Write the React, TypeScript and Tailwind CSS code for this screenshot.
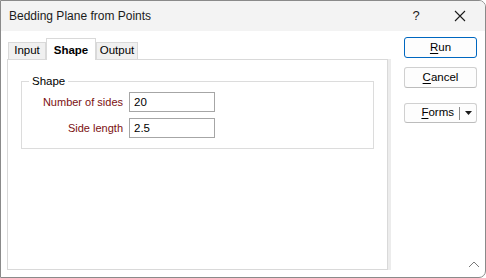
import React from "react";

const font = { fontFamily: '"Liberation Sans", Arial, sans-serif' };

const Mnemonic = ({ first, rest }: { first: string; rest: string }) => (
  <span>
    <span className="underline underline-offset-2">{first}</span>
    {rest}
  </span>
);

const FieldRow = ({ label, value }: { label: string; value: string }) => (
  <div className="flex items-center">
    <label className="w-[101px] text-right text-[#7b1010] leading-[16px]">{label}</label>
    <input
      readOnly
      value={value}
      className="ml-[6px] w-[86px] h-[20px] border border-[#a6a6a6] px-[4px] text-[11.5px] text-black outline-none"
    />
  </div>
);

export default function App() {
  return (
    <div
      className="relative w-[486px] h-[278px] bg-white border border-[#8a8a8a] rounded-r-[7px] overflow-hidden text-[11px] text-black flex flex-col"
      style={font}
    >
      {/* Title bar */}
      <div className="h-[30px] bg-[#f3f3f3] flex items-center pl-[8px] shrink-0">
        <span className="text-[12px] text-[#1b1b1b]">Bedding Plane from Points</span>
        <span className="ml-auto w-[14px] text-center text-[13px] text-[#1b1b1b] mr-[31px]">?</span>
        <svg width="12" height="12" viewBox="0 0 12 12" className="mr-[19px]">
          <path d="M1 1 L11 11 M11 1 L1 11" stroke="#1b1b1b" strokeWidth="1.1" />
        </svg>
      </div>

      {/* Body */}
      <div className="flex flex-1">
        {/* Tabs + panel */}
        <div className="w-[390px] pl-[6px] pt-[7px] flex flex-col">
          <div className="flex items-end h-[21px] pl-[1px]">
            <div className="h-[17px] w-[38px] border border-b-0 border-[#d9d9d9] bg-[#f0f0f0] flex items-center justify-center leading-none text-[11.5px]">
              Input
            </div>
            <div className="relative z-10 -mb-px h-[22px] w-[50px] border border-b-0 border-[#d9d9d9] bg-white flex items-start justify-center pt-[4px] font-bold leading-[14px] text-[11.5px]">
              Shape
            </div>
            <div className="h-[17px] w-[42px] border border-b-0 border-[#d9d9d9] bg-[#f0f0f0] flex items-center justify-center leading-none text-[11.5px]">
              Output
            </div>
          </div>
          <div className="flex h-[211px]">
            <div className="w-[381px] border border-[#d9d9d9] bg-white">
              <fieldset className="ml-[13px] mt-[13px] w-[353px] h-[76px] border border-[#dcdcdc]">
                <legend className="ml-[7px] px-[3px] leading-[16px] text-[11.5px]">Shape</legend>
                <div className="mt-[3px] flex flex-col gap-[6px]">
                  <FieldRow label="Number of sides" value="20" />
                  <FieldRow label="Side length" value="2.5" />
                </div>
              </fieldset>
            </div>
            <div className="w-[3px] bg-[#ececec]" />
          </div>
        </div>

        {/* Buttons */}
        <div className="ml-[13px] w-[73px] pt-[6px] flex flex-col text-[11.5px]">
          <button className="h-[21px] rounded-[3px] border border-[#0067c0] bg-[#fdfdfd] flex items-center justify-center">
            <Mnemonic first="R" rest="un" />
          </button>
          <button className="mt-[9px] h-[21px] rounded-[3px] border border-[#d0d0d0] border-b-[#bcbcbc] bg-[#fdfdfd] flex items-center justify-center">
            <Mnemonic first="C" rest="ancel" />
          </button>
          <button className="mt-[15px] h-[20px] rounded-[3px] border border-[#d0d0d0] border-b-[#bcbcbc] bg-[#fdfdfd] flex items-center">
            <span className="flex-1 text-right pr-[5px]">
              <Mnemonic first="F" rest="orms" />
            </span>
            <span className="h-[13px] w-px bg-[#8a8a8a]" />
            <span className="w-[16px] flex justify-center">
              <svg width="7" height="4" viewBox="0 0 7 4">
                <path d="M0 0 H7 L3.5 4 Z" fill="#1b1b1b" />
              </svg>
            </span>
          </button>
        </div>
      </div>

      {/* Resize grip */}
      <svg width="12" height="8" viewBox="0 0 12 8" className="absolute right-[5px] bottom-[9px]">
        <path d="M1 7 L6 2 L11 7" stroke="#7a7a7a" strokeWidth="1" fill="none" />
      </svg>
    </div>
  );
}
